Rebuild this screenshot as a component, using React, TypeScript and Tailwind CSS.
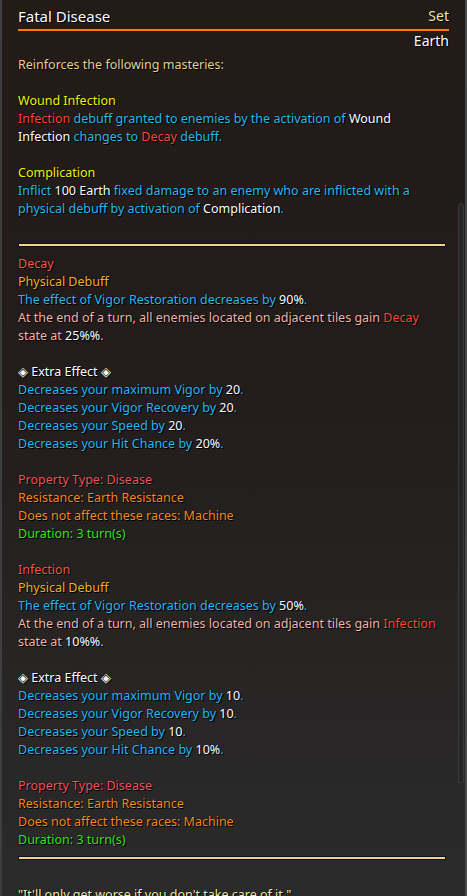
import React, { FC, ReactNode } from "react"

const C = {
  cyan: "text-[#26baf4]",
  white: "text-white",
  red: "text-[#ff4a3a]",
  head: "text-[#f25a4c]",
  gold: "text-[#f4b228]",
  pink: "text-[#f2b6aa]",
  prop: "text-[#f4545c]",
  orange: "text-[#f48c1e]",
  green: "text-[#40e41e]",
  yellow: "text-[#f4f400]",
  tan: "text-[#e6d290]",
}

const Line: FC<{ children?: ReactNode; className?: string }> = ({ children, className = "" }) => (
  <div className={`min-h-[18px] leading-[18px] ${className}`}>{children}</div>
)

const Separator: FC<{ className?: string }> = ({ className = "my-[8px]" }) => (
  <div className={`h-[4px] border border-[#111] bg-[#f0d48e] mr-[3px] ${className}`} />
)

const Debuff: FC<{ name: string; pct: string; chance: string; n: string }> = ({ name, pct, chance, n }) => (
  <>
    <Line className={C.head}>{name}</Line>
    <Line className={C.gold}>Physical Debuff</Line>
    <Line className={C.cyan}>
      The effect of Vigor Restoration decreases by <span className={C.white}>{pct}</span>.
    </Line>
    <Line className={C.pink}>
      At the end of a turn, all enemies located on adjacent tiles gain <span className={C.red}>{name}</span>
    </Line>
    <Line className={C.pink}>
      state at <span className={C.white}>{chance}</span>.
    </Line>
    <Line />
    <Line className={C.white}>◈ Extra Effect ◈</Line>
    <Line className={C.cyan}>
      Decreases your maximum Vigor by <span className={C.white}>{n}</span>.
    </Line>
    <Line className={C.cyan}>
      Decreases your Vigor Recovery by <span className={C.white}>{n}</span>.
    </Line>
    <Line className={C.cyan}>
      Decreases your Speed by <span className={C.white}>{n}</span>.
    </Line>
    <Line className={C.cyan}>
      Decreases your Hit Chance by <span className={C.white}>{n}%</span>.
    </Line>
    <Line />
    <Line className={C.prop}>Property Type: Disease</Line>
    <Line className={C.orange}>Resistance: Earth Resistance</Line>
    <Line className={C.orange}>Does not affect these races: Machine</Line>
    <Line className={C.green}>Duration: 3 turn(s)</Line>
  </>
)

const App: FC = () => {
  return (
    <div className="relative h-[896px] w-[467px] overflow-hidden border-l-2 border-r-2 border-l-[#3e3e3e] border-r-[#4a4a4a] bg-linear-to-b from-[#231b18] via-[#221c1b] via-40% to-[#2b2b2b] font-['Noto_Sans',sans-serif] text-[12.5px] [text-shadow:1px_1px_0_#000,0_0_1px_#000]">
      <div className="pl-[16px] pr-[16px] pt-[6px]">
        <div className="flex items-end justify-between border-b-2 border-[#ff7800] pb-[3px]">
          <span className="text-[15px] leading-[20px] text-white">Fatal Disease</span>
          <span className="text-[14px] leading-[20px] text-[#f2e6ae]">Set</span>
        </div>
        <div className="text-right text-[14px] leading-[20px] text-white">Earth</div>
        <div className="mt-[5px]">
          <Line className={C.tan}>Reinforces the following masteries:</Line>
          <Line />
          <Line className={C.yellow}>Wound Infection</Line>
          <Line className={C.cyan}>
            <span className={C.red}>Infection</span> debuff granted to enemies by the activation of{" "}
            <span className={C.white}>Wound</span>
          </Line>
          <Line className={C.cyan}>
            <span className={C.white}>Infection</span> changes to <span className={C.red}>Decay</span> debuff.
          </Line>
          <Line />
          <Line className={C.yellow}>Complication</Line>
          <Line className={C.cyan}>
            Inflict <span className={C.white}>100 Earth</span> fixed damage to an enemy who are inflicted with a
          </Line>
          <Line className={C.cyan}>
            physical debuff by activation of <span className={C.white}>Complication</span>.
          </Line>
          <Line />
        </div>
        <Separator className="mt-[7px] mb-[8px]" />
        <div className="mt-[5px]">
          <Debuff name="Decay" pct="90%" chance="25%%" n="20" />
          <Line />
          <Debuff name="Infection" pct="50%" chance="10%%" n="10" />
        </div>
        <Separator className="mt-[7px] mb-[8px]" />
        <Line />
        <Line className="text-[#f2eea6]">"It'll only get worse if you don't take care of it."</Line>
      </div>
      <div className="absolute right-[1px] top-[203px] h-[580px] w-[6px] rounded-t-[3px] border border-[#3a3a3a] bg-[#262626]" />
    </div>
  )
}

export default App
